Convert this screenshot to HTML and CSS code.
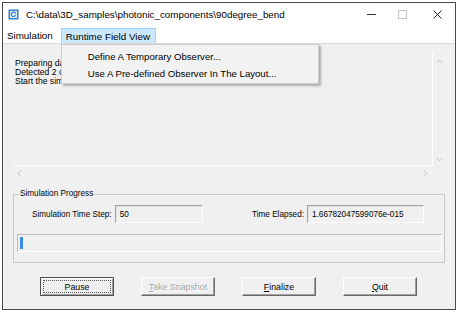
FILE: index.html
```html
<!DOCTYPE html>
<html lang="en">
  <head>
    <meta charset="UTF-8" />
    <title>90degree_bend</title>
    <link rel="stylesheet" href="styles.css">
  </head>
  <body>
    <div class="window">
      <div class="titlebar">
        <svg class="app-icon" width="11" height="11" viewBox="0 0 11 11">
          <rect x="0.5" y="0.5" width="10" height="10" fill="#2f7fcf" />
          <rect x="2" y="2" width="7" height="7" fill="#e4f1fc" />
          <path d="M7.4 4.2 A2.2 2.2 0 1 0 7.6 6" fill="none" stroke="#2f7fcf" stroke-width="1.1" />
          <path d="M6.3 3.4 L8 3.6 L7.8 5.2 Z" fill="#2f7fcf" />
        </svg>
        <span class="title">C:\data\3D_samples\photonic_components\90degree_bend</span>
        <div class="caption-buttons">
          <div class="cap cap-min">
            <svg width="9" height="9" viewBox="0 0 9 9"><path d="M0 4.5 H9" stroke="#333" stroke-width="1" /></svg>
          </div>
          <div class="cap cap-max">
            <svg width="9" height="9" viewBox="0 0 9 9"><rect x="0.5" y="0.5" width="8" height="8" fill="none" stroke="#c4c4c4" /></svg>
          </div>
          <div class="cap cap-close">
            <svg width="9" height="9" viewBox="0 0 9 9"><path d="M0.5 0.5 L8.5 8.5 M8.5 0.5 L0.5 8.5" stroke="#222" stroke-width="1" /></svg>
          </div>
        </div>
      </div>

      <div class="menubar">
        <span class="menu-item">Simulation</span>
        <span class="menu-item open">Runtime Field View
          <div class="dropdown">
            <div class="dropdown-item">Define A Temporary Observer...</div>
            <div class="dropdown-item">Use A Pre-defined Observer In The Layout...</div>
          </div>
        </span>
      </div>

      <div class="client">
        <div class="log">
          <div class="log-text">
            <div>Preparing data for simulation...</div>
            <div>Detected 2 observers in the layout.</div>
            <div>Start the simulation...</div>
          </div>
          <div class="vscroll">
            <svg width="7" height="5" viewBox="0 0 7 5"><path d="M0.5 4 L3.5 1 L6.5 4" fill="none" stroke="#bdbdbd" /></svg>
            <svg width="7" height="5" viewBox="0 0 7 5"><path d="M0.5 1 L3.5 4 L6.5 1" fill="none" stroke="#bdbdbd" /></svg>
          </div>
          <div class="hscroll">
            <svg width="5" height="7" viewBox="0 0 5 7"><path d="M4 0.5 L1 3.5 L4 6.5" fill="none" stroke="#bdbdbd" /></svg>
            <svg width="5" height="7" viewBox="0 0 5 7"><path d="M1 0.5 L4 3.5 L1 6.5" fill="none" stroke="#bdbdbd" /></svg>
          </div>
          <div class="corner"></div>
        </div>

        <fieldset class="progress-group">
          <legend>Simulation Progress</legend>
          <div class="fields">
            <div class="field">
              <label>Simulation Time Step:</label>
              <div class="value value-step">50</div>
            </div>
            <div class="field">
              <label>Time Elapsed:</label>
              <div class="value value-time">1.66782047599076e-015</div>
            </div>
          </div>
          <div class="progress">
            <div class="progress-fill" style="width: 3px"></div>
          </div>
        </fieldset>

        <div class="buttons">
          <button class="btn default"><span class="focus">Pause</span></button>
          <button class="btn" disabled><u>T</u>ake Snapshot</button>
          <button class="btn"><u>F</u>inalize</button>
          <button class="btn"><u>Q</u>uit</button>
        </div>
      </div>
    </div>
  </body>
</html>
```

FILE: styles.css
```css
body {
  margin: 0;
  background-color: #fff;
  font-family: "Liberation Sans", Arial, sans-serif;
}
.window {
  box-sizing: border-box;
  width: 454px;
  height: 308px;
  margin: 2px 0 0 2px;
  border: 1px solid #4a4a4a;
  display: flex;
  flex-direction: column;
  background-color: #f0f0f0;
}
.titlebar {
  height: 24px;
  background-color: #fff;
  display: flex;
  align-items: center;
}
.app-icon {
  margin: -2px 0 0 5px;
}
.title {
  margin: -2px 0 0 7px;
  font-size: 9.8px;
  color: #000;
  white-space: nowrap;
}
.caption-buttons {
  margin-left: auto;
  display: flex;
  height: 100%;
}
.cap {
  display: flex;
  align-items: center;
  justify-content: center;
  margin-top: -2px;
}
.cap-min {
  width: 30px;
}
.cap-max {
  width: 30px;
  margin-left: 1px;
}
.cap-close {
  width: 35px;
  margin-left: 3px;
}
.menubar {
  height: 16px;
  background-color: #fff;
  border-bottom: 1px solid #dadada;
  display: flex;
  align-items: stretch;
  font-size: 9.8px;
}
.menu-item {
  position: relative;
  display: flex;
  align-items: center;
  padding: 0 4px;
  white-space: nowrap;
}
.menu-item.open {
  margin-left: 4px;
  padding: 0 5px 0 4px;
  background-color: #cce8ff;
  border: 1px solid #99d1ff;
  border-bottom: none;
  margin-top: 1px;
}
.dropdown {
  position: absolute;
  left: -1px;
  top: 15px;
  z-index: 2;
  width: 256px;
  padding: 3px 0 1px;
  background-color: #f2f2f2;
  border: 1px solid #cccccc;
  box-shadow: 2px 2px 2px rgba(0, 0, 0, 0.28);
  font-size: 9.6px;
}
.dropdown-item {
  height: 17px;
  line-height: 17px;
  padding-left: 26px;
  color: #000;
}
.client {
  flex: 1;
  display: flex;
  flex-direction: column;
  padding: 0 8px 0 10px;
}
.log {
  margin-top: 8px;
  display: grid;
  grid-template-columns: 420px 13px;
  grid-template-rows: 114px 13px;
  font-size: 8.6px;
}
.log-text {
  padding: 7px 0 0 2px;
  line-height: 9px;
  border-right: 1px solid #fff;
  border-bottom: 1px solid #fff;
  color: #000;
}
.vscroll {
  display: flex;
  flex-direction: column;
  justify-content: space-between;
  align-items: center;
  padding: 7px 0 4px;
}
.hscroll {
  display: flex;
  justify-content: space-between;
  align-items: center;
  padding: 1px 5px 0 4px;
}
.progress-group {
  margin: 10px 0 0 0;
  width: 432px;
  box-sizing: border-box;
  padding: 0 0 10px;
  border: 1px solid #c9c9c9;
  font-size: 8.2px;
}
.progress-group legend {
  margin-left: 5px;
  padding: 0 1px;
  line-height: 10px;
}
.fields {
  margin-top: 6px;
  display: flex;
  justify-content: space-between;
  padding: 0 20px 0 18px;
}
.field {
  display: flex;
  align-items: center;
}
.value {
  box-sizing: border-box;
  height: 18px;
  margin-left: 3px;
  padding: 0 4px;
  display: flex;
  align-items: center;
  border-top: 1px solid #a0a0a0;
  border-left: 1px solid #a0a0a0;
  border-right: 1px solid #fff;
  border-bottom: 1px solid #fff;
  box-shadow: inset 1px 1px 0 #e3e3e3;
}
.value-step {
  width: 88px;
}
.value-time {
  width: 117px;
}
.progress {
  margin: 11px 2px 0 3px;
  height: 18px;
  box-sizing: border-box;
  padding: 2px;
  border-top: 1px solid #bcbcbc;
  border-left: 1px solid #bcbcbc;
  border-right: 1px solid #fff;
  border-bottom: 1px solid #fff;
  display: flex;
}
.progress-fill {
  background-color: #3a8ee6;
}
.buttons {
  margin-top: 14px;
  padding-left: 27px;
  display: flex;
  gap: 27px;
}
.btn {
  box-sizing: border-box;
  width: 74px;
  height: 19px;
  padding: 0;
  font-family: "Liberation Sans", Arial, sans-serif;
  font-size: 8.8px;
  color: #000;
  background-color: #f0f0f0;
  border-top: 1px solid #fff;
  border-left: 1px solid #fff;
  border-right: 1px solid #696969;
  border-bottom: 1px solid #696969;
  box-shadow: inset -1px -1px 0 #a0a0a0;
}
.btn:disabled {
  color: #a3a3a3;
  text-shadow: 1px 1px 0 #fff;
}
.btn.default {
  border: 1px solid #505050;
  padding: 2px;
  box-shadow: inset 1px 1px 0 #fff, inset -1px -1px 0 #a0a0a0;
}
.btn .focus {
  display: flex;
  align-items: center;
  justify-content: center;
  height: 100%;
  border: 1px dotted #555;
  box-sizing: border-box;
}
```
